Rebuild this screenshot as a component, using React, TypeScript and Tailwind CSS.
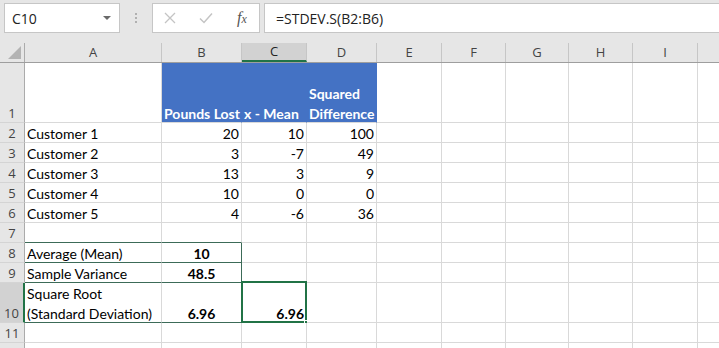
import type { ReactNode } from 'react';

const COLS = [
  { key: 'A', w: 'w-[137px]' },
  { key: 'B', w: 'w-[80px]' },
  { key: 'C', w: 'w-[65px]' },
  { key: 'D', w: 'w-[70px]' },
  { key: 'E', w: 'w-[65px]' },
  { key: 'F', w: 'w-[64px]' },
  { key: 'G', w: 'w-[63px]' },
  { key: 'H', w: 'w-[64px]' },
  { key: 'I', w: 'w-[65px]' },
  { key: 'J', w: 'w-[40px]' },
];

type Cell = {
  text?: ReactNode;
  align?: 'left' | 'right' | 'center';
  bold?: boolean;
  blue?: boolean;
  bottom?: boolean; // dark border below
  right?: boolean; // dark border right
  selected?: boolean;
};

type RowDef = { n: number; label?: string; h: string; cells: Record<string, Cell> };

const ROWS: RowDef[] = [
  {
    n: 1,
    h: 'h-[60px]',
    cells: {
      B: { text: 'Pounds Lost', blue: true, bold: true },
      C: { text: 'x - Mean', blue: true, bold: true },
      D: { text: <>Squared<br />Difference</>, blue: true, bold: true },
    },
  },
  { n: 2, h: 'h-[20px]', cells: { A: { text: 'Customer 1' }, B: { text: '20', align: 'right' }, C: { text: '10', align: 'right' }, D: { text: '100', align: 'right' } } },
  { n: 3, h: 'h-[20px]', cells: { A: { text: 'Customer 2' }, B: { text: '3', align: 'right' }, C: { text: '-7', align: 'right' }, D: { text: '49', align: 'right' } } },
  { n: 4, h: 'h-[20px]', cells: { A: { text: 'Customer 3' }, B: { text: '13', align: 'right' }, C: { text: '3', align: 'right' }, D: { text: '9', align: 'right' } } },
  { n: 5, h: 'h-[20px]', cells: { A: { text: 'Customer 4' }, B: { text: '10', align: 'right' }, C: { text: '0', align: 'right' }, D: { text: '0', align: 'right' } } },
  { n: 6, h: 'h-[20px]', cells: { A: { text: 'Customer 5' }, B: { text: '4', align: 'right' }, C: { text: '-6', align: 'right' }, D: { text: '36', align: 'right' } } },
  { n: 7, h: 'h-[20px]', cells: { A: { bottom: true }, B: { bottom: true } } },
  {
    n: 8,
    h: 'h-[20px]',
    cells: {
      A: { text: 'Average (Mean)', bottom: true },
      B: { text: '10', align: 'center', bold: true, bottom: true, right: true },
    },
  },
  {
    n: 9,
    h: 'h-[20px]',
    cells: {
      A: { text: 'Sample Variance', bottom: true },
      B: { text: '48.5', align: 'center', bold: true, bottom: true, right: true },
    },
  },
  {
    n: 10,
    h: 'h-[40px]',
    cells: {
      A: { text: <>Square Root<br />(Standard Deviation)</>, bottom: true },
      B: { text: '6.96', align: 'center', bold: true, bottom: true },
      C: { text: '6.96', align: 'right', bold: true, selected: true },
    },
  },
  { n: 11, h: 'h-[20px]', cells: {} },
  // row 12 is only a sliver at the bottom edge, its number is not visible
  { n: 12, label: '', h: 'h-[20px]', cells: {} },
];

function SheetCell({ cell, w }: { cell?: Cell; w: string }) {
  const c = cell ?? {};
  const justify =
    c.align === 'right' ? 'justify-end text-right' : c.align === 'center' ? 'justify-center text-center' : 'justify-start';
  const bg = c.blue ? 'bg-[#4472c4] text-white border-r-[#4472c4]' : 'bg-white text-black';
  const rb = c.right ? 'border-r-[#3c6b58]' : c.blue ? '' : 'border-r-[#d9d9d9]';
  const bb = c.bottom ? 'border-b-[#3c6b58]' : 'border-b-[#d9d9d9]';
  return (
    <div
      className={`relative flex shrink-0 items-end border-r border-b px-[2px] leading-[20px] ${w} ${bg} ${rb} ${bb} ${justify} ${c.bold ? 'font-bold' : ''}`}
    >
      {c.text !== undefined && <span className="-mb-[2px] whitespace-nowrap">{c.text}</span>}
      {c.selected && (
        <>
          <div className="pointer-events-none absolute -top-[2px] -left-[1px] -right-[1px] -bottom-[1px] border-2 border-[#217346]" />
          <div className="absolute -right-[4px] -bottom-[4px] h-[6px] w-[6px] border border-white bg-[#217346]" />
        </>
      )}
    </div>
  );
}

function Toolbar() {
  return (
    <div className="flex h-[43px] items-start bg-[#e6e6e6] pt-[3px] pl-[4px]">
      <div className="flex h-[30px] w-[116px] items-center justify-between border border-[#c6c6c6] bg-white pr-[8px] pl-[7px] text-[14px] text-[#222]">
        <span>C10</span>
        <span className="h-0 w-0 border-x-[4px] border-t-[4px] border-x-transparent border-t-[#6a6a6a]" />
      </div>
      <div className="flex h-[30px] w-[32px] flex-col items-center justify-center gap-[2px]">
        <span className="h-[2px] w-[2px] bg-[#b0b0b0]" />
        <span className="h-[2px] w-[2px] bg-[#b0b0b0]" />
        <span className="h-[2px] w-[2px] bg-[#b0b0b0]" />
      </div>
      <div className="flex h-[30px] w-[108px] items-center border border-[#c6c6c6] bg-white">
        <svg className="ml-[11px]" width="12" height="12" viewBox="0 0 12 12">
          <path d="M1 1 L11 11 M11 1 L1 11" stroke="#c4c4c4" strokeWidth="1.3" fill="none" />
        </svg>
        <svg className="ml-[23px]" width="14" height="12" viewBox="0 0 14 12">
          <path d="M1 6.5 L5 10.5 L13 1.5" stroke="#c4c4c4" strokeWidth="1.5" fill="none" />
        </svg>
        <span className="ml-[24px] font-['Liberation_Serif',serif] text-[16px] italic leading-none text-[#555]">
          f<span className="text-[12px]">x</span>
        </span>
      </div>
      <div className="ml-[4px] flex h-[30px] flex-1 items-center border border-r-0 border-[#c6c6c6] bg-white pl-[11px] text-[14px] text-[#222]">
        =STDEV.S(B2:B6)
      </div>
    </div>
  );
}

function ColumnHeaders() {
  return (
    <div className="flex h-[20px] border-b border-[#9e9e9e] bg-[#e6e6e6] text-[13px] text-[#444]">
      <div className="relative w-[25px] shrink-0 border-r border-[#ababab]">
        <div className="absolute right-[3px] bottom-[3px] h-0 w-0 border-b-[13px] border-l-[13px] border-b-[#b3b3b3] border-l-transparent" />
      </div>
      {COLS.map((c) => (
        <div
          key={c.key}
          className={`flex shrink-0 items-center justify-center border-r border-[#c6c6c6] ${c.w} ${
            c.key === 'C' ? 'border-b-2 border-b-[#217346] bg-[#d2d2d2] text-[#222]' : ''
          }`}
        >
          {c.key === 'J' ? '' : c.key}
        </div>
      ))}
    </div>
  );
}

export default function App() {
  return (
    <div className="h-[348px] w-[719px] overflow-hidden bg-white font-['Lato',sans-serif]">
      <div className="font-['Open_Sans',sans-serif]">
        <Toolbar />
        <ColumnHeaders />
      </div>
      <div className="text-[14px]">
        {ROWS.map((r) => (
          <div key={r.n} className={`flex ${r.h}`}>
            <div
              className={`flex w-[25px] shrink-0 items-end justify-center border-b border-b-[#d4d4d4] font-['Open_Sans',sans-serif] text-[13px] leading-[20px] text-[#444] ${
                r.n === 10
                  ? 'border-r-2 border-r-[#217346] bg-[#d2d2d2]'
                  : 'border-r border-r-[#ababab] bg-[#e6e6e6]'
              }`}
            >
              <span className="-mb-[1px]">{r.label ?? r.n}</span>
            </div>
            {COLS.map((c) => (
              <SheetCell key={c.key} cell={r.cells[c.key]} w={c.w} />
            ))}
          </div>
        ))}
      </div>
    </div>
  );
}
